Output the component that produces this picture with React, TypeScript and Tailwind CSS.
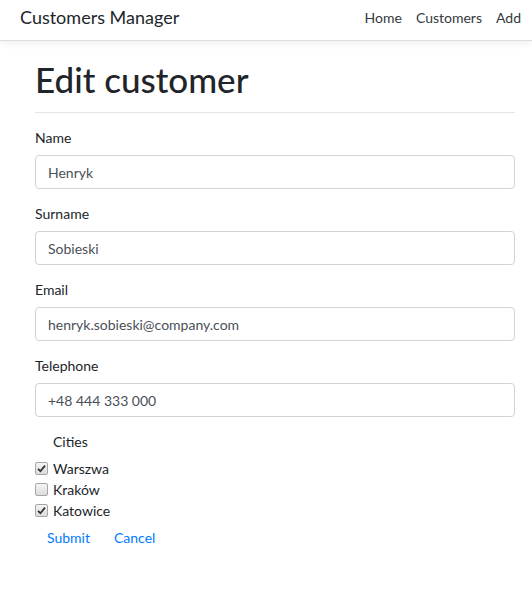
import { useState } from "react";

const font = "font-['Lato','Open_Sans',sans-serif]";

const Field = ({
  label,
  value,
  onChange,
}: {
  label: string;
  value: string;
  onChange: (v: string) => void;
}) => (
  <div className="flex flex-col mb-[15px]">
    <label className="text-[14px] leading-[20px] text-[#212529] mb-[7px]">
      {label}
    </label>
    <input
      type="text"
      value={value}
      onChange={(e) => onChange(e.target.value)}
      className="h-[34px] w-full rounded-[4px] border border-[#ced4da] bg-white px-3 text-[14px] text-[#495057] focus:outline-none"
    />
  </div>
);

const CheckRow = ({
  label,
  checked,
  onToggle,
}: {
  label: string;
  checked: boolean;
  onToggle: () => void;
}) => (
  <div
    className="flex items-center h-[21px] cursor-pointer"
    onClick={onToggle}
  >
    {/* windows-ish checkbox */}
    <span className="flex items-center justify-center w-[13px] h-[13px] rounded-[2px] border border-[#a6a6a6] bg-gradient-to-b from-[#f4f4f4] to-[#dcdcdc]">
      {checked && (
        <svg width="9" height="9" viewBox="0 0 9 9">
          <path
            d="M1 4.8 L3.4 7.2 L8 1.6"
            fill="none"
            stroke="#333"
            strokeWidth="1.8"
          />
        </svg>
      )}
    </span>
    <span className="ml-[5px] text-[14px] text-[#212529]">{label}</span>
  </div>
);

const App = () => {
  const [name, setName] = useState("Henryk");
  const [surname, setSurname] = useState("Sobieski");
  const [email, setEmail] = useState("henryk.sobieski@company.com");
  const [phone, setPhone] = useState("+48 444 333 000");
  const [cities, setCities] = useState({
    Warszwa: true,
    Kraków: false,
    Katowice: true,
  });

  const toggle = (c: keyof typeof cities) =>
    setCities({ ...cities, [c]: !cities[c] });

  return (
    <div className={`${font} min-h-[589px] bg-white`}>
      {/* navbar */}
      <nav className="relative h-[41px] flex items-center justify-between pl-5 pr-[11px] pb-[6px] border-b border-[#dcdcdc] shadow-[0_2px_8px_rgba(0,0,0,0.07)]">
        <span className="text-[18px] text-[#212529]">Customers Manager</span>
        <div className="flex gap-[14px] text-[14px] text-[#343a40]">
          <a>Home</a>
          <a>Customers</a>
          <a>Add</a>
        </div>
      </nav>

      <div className="ml-[35px] w-[480px]">
        {/* head */}
        <h1 className="mt-[18px] text-[35px] leading-[40px] font-medium text-[#212529]">
          Edit customer
        </h1>
        <hr className="mt-[13px] mb-[15px] border-[#e5e5e5]" />

        {/* form */}
        <form onSubmit={(e) => e.preventDefault()}>
          <Field label="Name" value={name} onChange={setName} />
          <Field label="Surname" value={surname} onChange={setSurname} />
          <Field label="Email" value={email} onChange={setEmail} />
          <Field label="Telephone" value={phone} onChange={setPhone} />

          <div className="ml-[18px] text-[14px] leading-[20px] text-[#212529] mb-[6px]">
            Cities
          </div>
          <CheckRow
            label="Warszwa"
            checked={cities.Warszwa}
            onToggle={() => toggle("Warszwa")}
          />
          <CheckRow
            label="Kraków"
            checked={cities["Kraków"]}
            onToggle={() => toggle("Kraków")}
          />
          <CheckRow
            label="Katowice"
            checked={cities.Katowice}
            onToggle={() => toggle("Katowice")}
          />

          {/* buttons */}
          <div className="flex mt-[7px] text-[14px] leading-[20px] text-[#007bff]">
            <button className="px-3">Submit</button>
            <button type="button" className="px-3">
              Cancel
            </button>
          </div>
        </form>
      </div>
    </div>
  );
};

export default App;
